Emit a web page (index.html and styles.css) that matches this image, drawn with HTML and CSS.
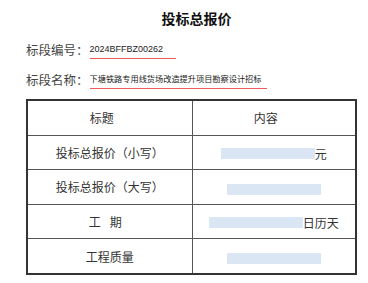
FILE: index.html
```html
<!DOCTYPE html>
<html lang="zh">
<head>
<meta charset="utf-8">
<link rel="stylesheet" href="styles.css">
</head>
<body>
<div class="page">
  <h1 class="title">投标总报价</h1>
  <div class="field">
    <span class="label">标段编号：</span><span class="value code">2024BFFBZ00262</span>
  </div>
  <div class="field">
    <span class="label">标段名称：</span><span class="value name">下塘铁路专用线货场改造提升项目勘察设计招标</span>
  </div>
  <table class="grid">
    <colgroup>
      <col class="col1">
      <col class="col2">
    </colgroup>
    <tr class="head">
      <td>标题</td>
      <td>内容</td>
    </tr>
    <tr>
      <td>投标总报价（小写）</td>
      <td><span class="blank"></span><span class="unit">元</span></td>
    </tr>
    <tr>
      <td>投标总报价（大写）</td>
      <td><span class="blank"></span></td>
    </tr>
    <tr>
      <td class="period">工<span class="gap"></span>期</td>
      <td><span class="blank"></span><span class="unit">日历天</span></td>
    </tr>
    <tr>
      <td>工程质量</td>
      <td><span class="blank"></span></td>
    </tr>
  </table>
</div>
</body>
</html>
```
FILE: styles.css
```css
html, body {
  margin: 0;
  padding: 0;
  background: #ffffff;
}
body {
  font-family: "Noto Sans CJK SC", "Liberation Sans", sans-serif;
  color: #333333;
}
.page {
  padding: 10px 11px 0 26px;
}
.title {
  margin: 0 0 8px 0;
  padding-left: 10px;
  font-size: 14px;
  font-weight: bold;
  color: #111111;
  text-align: center;
  line-height: 16px;
}
.field {
  display: flex;
  align-items: center;
  height: 30px;
}
.label {
  font-size: 12.5px;
  color: #444444;
  margin-right: 1px;
}
.value {
  color: #222222;
  font-family: "Liberation Sans", "Noto Sans CJK SC", sans-serif;
  border-bottom: 1px solid #f05a5a;
  line-height: 11px;
  padding-top: 4px;
  padding-bottom: 3px;
}
.code {
  font-size: 9px;
  padding-right: 13px;
}
.name {
  font-size: 8.2px;
  padding-right: 6px;
}
.grid {
  margin-top: 5px;
  width: 331px;
  table-layout: fixed;
  border-collapse: collapse;
  border: 2px solid #333333;
  font-size: 12px;
}
.col1 {
  width: 165px;
}
.grid td {
  border: 1px solid #555555;
  height: 33.6px;
  padding: 0;
  text-align: center;
  vertical-align: middle;
  color: #333333;
}
.head td {
  padding-right: 16px;
}
.grid td.period {
  padding-right: 9px;
}
.gap {
  display: inline-block;
  width: 9px;
}
.blank {
  display: inline-block;
  width: 94px;
  height: 11px;
  background: #dae6f4;
  vertical-align: middle;
}
.unit {
  vertical-align: middle;
}
```
